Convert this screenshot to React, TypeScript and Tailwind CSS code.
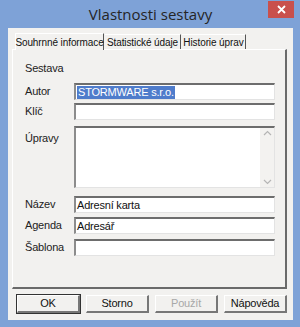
import React from "react";

const font = "font-['Liberation_Sans',Arial,sans-serif]";

const Field: React.FC<{ value?: string; selected?: boolean; tall?: boolean }> = ({ value, selected, tall }) => (
  <div
    className={`relative w-[201px] ${tall ? "h-[62px]" : "h-[17px]"} bg-white border-t-2 border-l-2 border-t-[#6d6d6d] border-l-[#8c8c8c] border-r border-b border-r-[#e3e3e3] border-b-[#e3e3e3] flex ${tall ? "items-start" : "items-center"} pl-[1px] text-[11px] text-[#111] leading-none tracking-[-0.2px]`}
  >
    {value && (
      <span className={selected ? "bg-[#4f7ccb] text-white px-[1px] py-[1px]" : ""}>{value}</span>
    )}
    {tall && (
      <div className="absolute right-0 top-0 bottom-0 w-[14px] bg-[#f3f2f0] flex flex-col justify-between items-center py-[2px] text-[#b5b5b5]">
        <svg width="9" height="6" viewBox="0 0 9 6"><path d="M1 5 L4.5 1.5 L8 5" fill="none" stroke="currentColor" strokeWidth="1.2" /></svg>
        <svg width="9" height="6" viewBox="0 0 9 6"><path d="M1 1 L4.5 4.5 L8 1" fill="none" stroke="currentColor" strokeWidth="1.2" /></svg>
      </div>
    )}
  </div>
);

const Row: React.FC<{ label: string; children: React.ReactNode; top?: boolean; className?: string }> = ({ label, children, top, className }) => (
  <div className={`flex ${top ? "items-start" : "items-center"} ${className ?? ""}`}>
    <div className={`w-[49px] text-[11px] text-[#222] tracking-[-0.2px] ${top ? "pt-[4px]" : ""}`}>{label}</div>
    {children}
  </div>
);

const Btn: React.FC<{ label: string; def?: boolean; disabled?: boolean }> = ({ label, def, disabled }) => (
  <div
    className={`w-[63px] h-[18px] flex items-center justify-center text-[11px] tracking-[-0.2px] bg-[#f2f1ef] border-t border-l border-t-white border-l-white border-r-2 border-b-2 border-r-[#777] border-b-[#777] ${
      def ? "outline outline-1 outline-[#333]" : ""
    } ${disabled ? "text-[#a8a8a8]" : "text-[#111]"}`}
  >
    {label}
  </div>
);

const App: React.FC = () => {
  return (
    <div className={`w-[300px] h-[327px] bg-[#7ea2d7] flex flex-col pl-[8px] pr-[7px] pb-[7px] ${font}`}>
      {/* Title bar */}
      <div className="relative h-[28px] flex items-center justify-center">
        <span className="font-['Open_Sans',sans-serif] text-[15px] text-[#252525] pt-[1px]">Vlastnosti sestavy</span>
        <div className="absolute right-[-1px] top-[1px] w-[26px] h-[17px] bg-[#c9504c] flex items-center justify-center">
          <svg width="9" height="9" viewBox="0 0 9 9"><path d="M1 1 L8 8 M8 1 L1 8" stroke="white" strokeWidth="1.8" /></svg>
        </div>
      </div>

      {/* Client area */}
      <div className="flex-1 bg-[#f2f1ef] pl-[4px] pr-[6px] pt-[4px] flex flex-col">
        {/* Tabs */}
        <div className="flex items-end pl-[3px] h-[17px] relative z-10 text-[10px] text-[#111] whitespace-nowrap tracking-[-0.1px]">
          <div className="w-[89px] h-[17px] flex items-center justify-center bg-[#f2f1ef] border-t border-l border-t-white border-l-white border-r border-r-[#555] mb-[-1px]">
            Souhrnné informace
          </div>
          <div className="w-[76px] h-[15px] flex items-center justify-center border-t border-t-white border-r border-r-[#555] ml-[1px]">
            Statistické údaje
          </div>
          <div className="w-[64px] h-[15px] flex items-center justify-center border-t border-t-white border-r border-r-[#555] ml-[1px]">
            Historie úprav
          </div>
        </div>

        {/* Panel */}
        <div className="h-[240px] border-t border-l border-t-white border-l-white border-r-2 border-b-2 border-r-[#6a6a6a] border-b-[#6a6a6a] pl-[12px] pt-[11px] flex flex-col">
          <div className="text-[11px] text-[#222] h-[14px] leading-[14px] tracking-[-0.2px]">Sestava</div>
          <Row label="Autor" className="mt-[8px]">
            <Field value="STORMWARE s.r.o." selected />
          </Row>
          <Row label="Klíč" className="mt-[3px]">
            <Field />
          </Row>
          <Row label="Úpravy" top className="mt-[6px]">
            <Field tall />
          </Row>
          <Row label="Název" className="mt-[8px]">
            <Field value="Adresní karta" />
          </Row>
          <Row label="Agenda" className="mt-[4px]">
            <Field value="Adresář" />
          </Row>
          <Row label="Šablona" className="mt-[5px]">
            <Field />
          </Row>
        </div>

        {/* Buttons */}
        <div className="flex justify-end gap-[6px] mt-[6px]">
          <Btn label="OK" def />
          <Btn label="Storno" />
          <Btn label="Použít" disabled />
          <Btn label="Nápověda" />
        </div>
      </div>
    </div>
  );
};

export default App;
